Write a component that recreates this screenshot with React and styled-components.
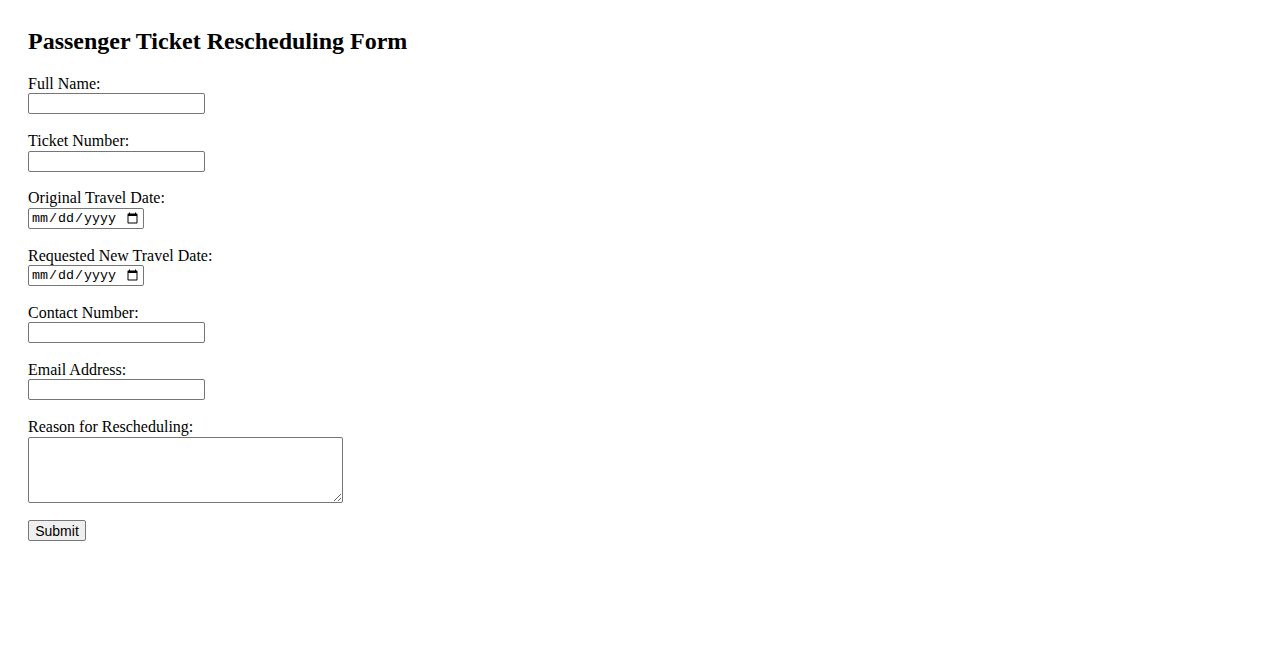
import React from 'react';
import styled, { createGlobalStyle } from 'styled-components';

const GlobalStyle = createGlobalStyle`
    body {
        margin: 0;
        background: #ffffff;
        color: #000000;
        font-family: "Liberation Serif", "Times New Roman", serif;
    }
`

const Page = styled.div`
    padding: 28px 28px;
`

const Title = styled.h2`
    margin: 0 0 20px 0;
    font-size: 24px;
    font-weight: bold;
    line-height: 27px;
`

const Form = styled.form`
    display: flex;
    flex-direction: column;
    align-items: flex-start;
`

const Field = styled.div`
    display: flex;
    flex-direction: column;
    align-items: flex-start;
    margin-bottom: 17.8px;
`

const Label = styled.label`
    display: block;
    font-size: 16px;
    line-height: 18.4px;
`

const Input = styled.input`
    box-sizing: border-box;
    width: ${props => props.type === 'date' ? '116px' : '177px'};
    height: 21px;
    margin: 0;
    padding: 1px 2px;
    border: 1px solid #767676;
    border-radius: 2px;
    font-family: ${props => props.type === 'date' ? '"Liberation Mono", monospace' : '"Liberation Sans", Arial, sans-serif'};
    font-size: 13.33px;
    background: #ffffff;
`

const TextArea = styled.textarea`
    box-sizing: border-box;
    width: 315px;
    height: 66px;
    margin: 0;
    padding: 2px;
    border: 1px solid #767676;
    border-radius: 2px;
    font-family: "Liberation Mono", monospace;
    font-size: 13.33px;
`

const SubmitButton = styled.button`
    box-sizing: border-box;
    width: 58px;
    height: 21px;
    padding: 0 6px;
    border: 1px solid #767676;
    border-radius: 2px;
    background: #efefef;
    color: #000000;
    font-family: "Liberation Sans", Arial, sans-serif;
    font-size: 14px;
    line-height: 1;
`

const fields = [
    { id: 'fullName', label: 'Full Name:', type: 'text' },
    { id: 'ticketNumber', label: 'Ticket Number:', type: 'text' },
    { id: 'originalDate', label: 'Original Travel Date:', type: 'date' },
    { id: 'newDate', label: 'Requested New Travel Date:', type: 'date' },
    { id: 'contactNumber', label: 'Contact Number:', type: 'tel' },
    { id: 'email', label: 'Email Address:', type: 'email' },
];

const App = () => {
    return (
        <Page>
            <GlobalStyle />
            <Title>Passenger Ticket Rescheduling Form</Title>
            <Form onSubmit={e => e.preventDefault()}>
                {fields.map(f => (
                    <Field key={f.id}>
                        <Label htmlFor={f.id}>{f.label}</Label>
                        <Input id={f.id} name={f.id} type={f.type} />
                    </Field>
                ))}
                <Field>
                    <Label htmlFor='reason'>Reason for Rescheduling:</Label>
                    <TextArea id='reason' name='reason' />
                </Field>
                <SubmitButton type='submit'>Submit</SubmitButton>
            </Form>
        </Page>
    );
}

export default App;
